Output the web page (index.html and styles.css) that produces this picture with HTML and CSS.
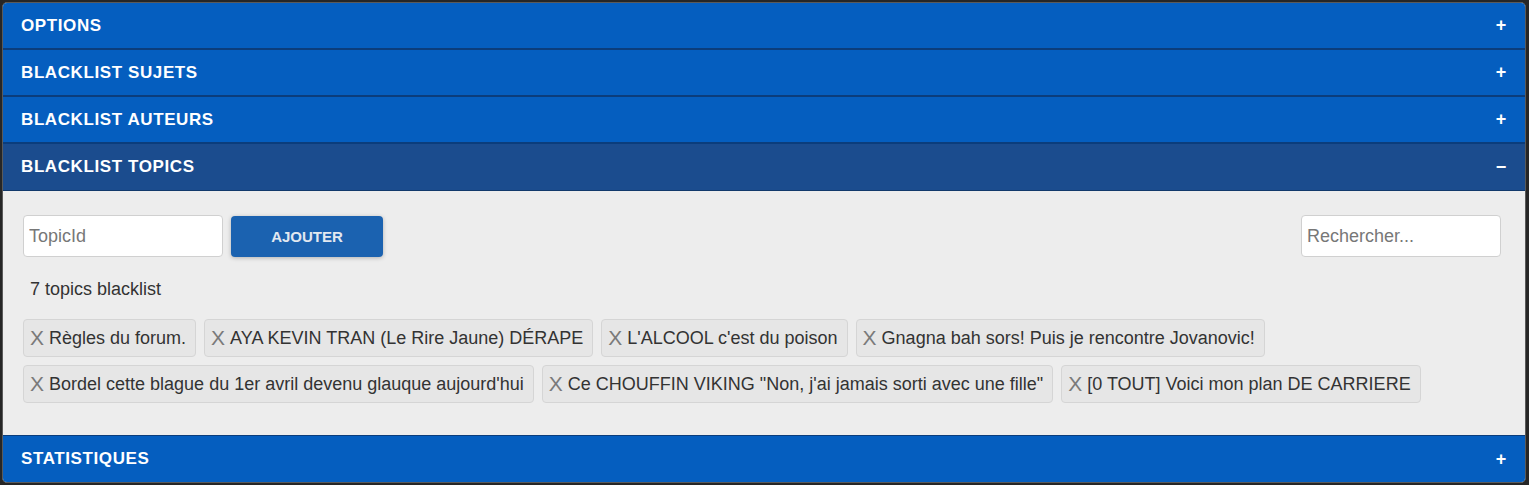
FILE: index.html
```html
<!DOCTYPE html>
<html lang="fr">
<head>
  <meta charset="UTF-8">
  <title>Blacklist</title>
  <link rel="stylesheet" href="styles.css">
</head>
<body>
  <div class="panel">
    <div class="head">
      <span>OPTIONS</span><span class="sign">+</span>
    </div>
    <div class="head">
      <span>BLACKLIST SUJETS</span><span class="sign">+</span>
    </div>
    <div class="head">
      <span>BLACKLIST AUTEURS</span><span class="sign">+</span>
    </div>
    <div class="head open">
      <span>BLACKLIST TOPICS</span><span class="sign">&minus;</span>
    </div>
    <div class="body">
      <div class="tools">
        <input class="field" type="text" placeholder="TopicId">
        <button class="btn">AJOUTER</button>
        <input class="field search" type="text" placeholder="Rechercher...">
      </div>
      <p class="count">7 topics blacklist</p>
      <div class="tags">
        <span class="tag"><b>X</b> Règles du forum.</span>
        <span class="tag"><b>X</b> AYA KEVIN TRAN (Le Rire Jaune) DÉRAPE</span>
        <span class="tag"><b>X</b> L'ALCOOL c'est du poison</span>
        <span class="tag"><b>X</b> Gnagna bah sors! Puis je rencontre Jovanovic!</span>
        <span class="tag"><b>X</b> Bordel cette blague du 1er avril devenu glauque aujourd'hui</span>
        <span class="tag"><b>X</b> Ce CHOUFFIN VIKING "Non, j'ai jamais sorti avec une fille"</span>
        <span class="tag"><b>X</b> [0 TOUT] Voici mon plan DE CARRIERE</span>
      </div>
    </div>
    <div class="head last">
      <span>STATISTIQUES</span><span class="sign">+</span>
    </div>
  </div>
</body>
</html>
```

FILE: styles.css
```css
html, body{
	margin: 0;
	height: 100%;
}
body{
	background-color: #262626;
	padding: 2px 3px 2px 2px;
	box-sizing: border-box;
	font-family: "Liberation Sans", Arial, sans-serif;
}
.panel{
	border: 1px solid #5a5a5a;
	border-radius: 5px;
	overflow: hidden;
	background-color: #ededed;
}
.head{
	display: flex;
	justify-content: space-between;
	align-items: center;
	height: 45px;
	padding: 0 17px 0 18px;
	background-color: #055ebf;
	border-bottom: 2px solid #0b3d7c;
	color: #fff;
	font-weight: bold;
	font-size: 17px;
	letter-spacing: 0.6px;
}
.head.open{
	background-color: #1b4c8e;
	border-bottom: 1px solid #12396b;
	height: 46px;
}
.head.last{
	border-bottom: none;
	border-top: 1px solid #0b3d7c;
	height: 46px;
}
.sign{
	font-size: 18px;
	width: 14px;
	text-align: center;
	letter-spacing: 0;
}
.body{
	padding: 24px 24px 32px 20px;
}
.tools{
	display: flex;
	align-items: center;
	gap: 8px;
}
.field{
	width: 200px;
	height: 42px;
	box-sizing: border-box;
	border: 1px solid #d0d0d0;
	border-radius: 4px;
	background-color: #fff;
	padding: 0 5px;
	font-family: "Liberation Sans", Arial, sans-serif;
	font-size: 18px;
	color: #333;
}
.field::placeholder{
	color: #777;
}
.search{
	margin-left: auto;
}
.btn{
	width: 152px;
	height: 41px;
	margin-top: 1px;
	border: none;
	border-radius: 4px;
	background-color: #1b62b0;
	color: #e2e8f0;
	font-family: "Liberation Sans", Arial, sans-serif;
	font-weight: bold;
	font-size: 15px;
	box-shadow: 0 1px 4px rgba(0,0,0,0.25);
}
.count{
	margin: 22px 0 0 7px;
	font-size: 18px;
	color: #333;
}
.tags{
	display: flex;
	flex-wrap: wrap;
	gap: 8px 8px;
	margin-top: 19px;
}
.tag{
	display: flex;
	align-items: center;
	height: 38px;
	box-sizing: border-box;
	padding: 0 9px 0 6px;
	background-color: #e6e6e6;
	border: 1px solid #d5d5d5;
	border-radius: 4px;
	font-size: 18px;
	color: #333;
}
.tag b{
	font-weight: normal;
	color: #7a7a7a;
	font-size: 21px;
	margin-right: 5px;
}
```
